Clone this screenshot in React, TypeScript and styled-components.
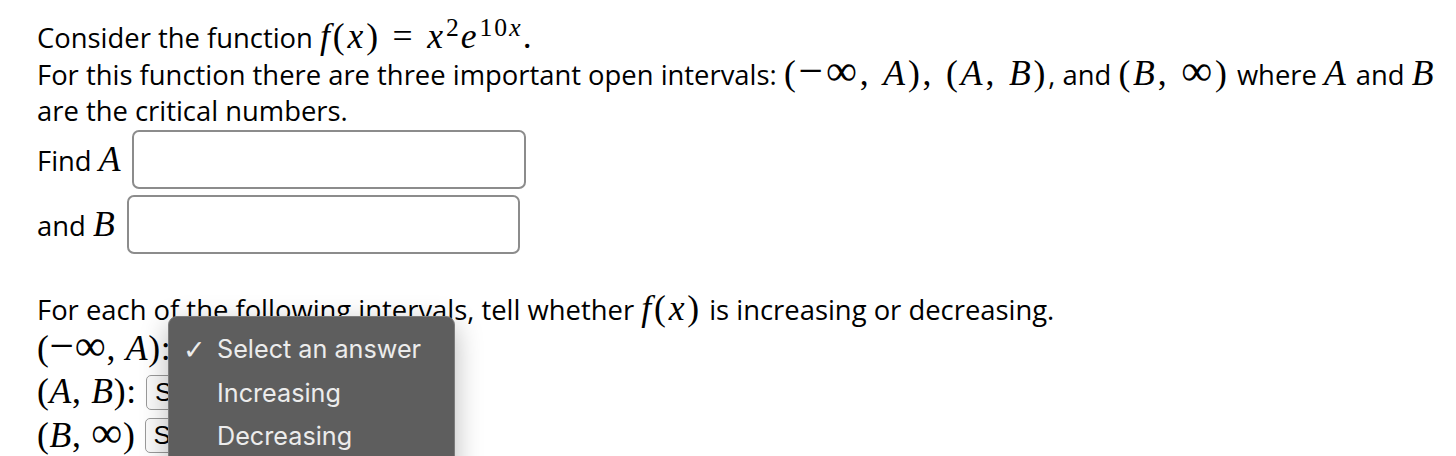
import { createGlobalStyle, styled } from "styled-components";

const GlobalStyle = createGlobalStyle`
    html, body {
        margin: 0;
        background: #ffffff;
    }
    body {
        font-family: "Open Sans", "Noto Sans", sans-serif;
        color: #000;
    }
`;

const StyledMain = styled.main`
    padding: 18px 0 0 37px;
    font-size: 27.4px;
    line-height: 37px;
    white-space: nowrap;
`;

const StyledLine = styled.div`
    height: 37px;
`;

// tight is for the interval labels, which sit a little closer than inline math
const StyledMath = styled.span<{ upright?: boolean; tight?: boolean }>`
    font-family: "Liberation Serif", "DejaVu Serif", serif;
    font-style: ${({ upright }) => (upright ? "normal" : "italic")};
    font-size: 1.3em;
    letter-spacing: ${({ tight }) => (tight ? "0.02em" : "0.08em")};
`;

const StyledSymbol = styled.span`
    font-size: 1.22em;
    line-height: 0;
`;

const StyledSup = styled.sup`
    font-size: 0.72em;
    line-height: 0;
    vertical-align: 0.62em;
`;

const StyledAnswerRow = styled.div<{ top: number }>`
    display: flex;
    align-items: center;
    gap: 9px;
    margin-top: ${({ top }) => top}px;
    height: 59px;
`;

const StyledInput = styled.input<{ boxWidth: number }>`
    width: ${({ boxWidth }) => boxWidth}px;
    height: 59px;
    box-sizing: border-box;
    border: 2px solid #8c8c8c;
    border-radius: 7px;
    background: #fff;
    outline: none;
`;

const StyledIntervals = styled.section`
    position: relative;
    margin-top: 36px;
`;

const StyledIntervalRow = styled.div`
    display: flex;
    align-items: center;
    gap: 9px;
    height: 43.5px;
`;

const StyledSelect = styled.div`
    height: 35px;
    padding: 0 8px;
    box-sizing: border-box;
    border: 1.5px solid #9a9a9a;
    border-radius: 5px;
    background: #fafafa;
    font-family: "Liberation Sans", Arial, sans-serif;
    font-size: 26px;
    line-height: 32px;
    color: #000;
`;

const StyledMenu = styled.div`
    position: absolute;
    left: 131px;
    top: 26px;
    width: 287px;
    height: 170px;
    box-sizing: border-box;
    padding-top: 11px;
    background: #5e5e5e;
    border: 1px solid #7c7c7c;
    border-radius: 9px;
    box-shadow: 0 8px 28px rgba(0, 0, 0, 0.28);
    font-family: Inter, "Liberation Sans", sans-serif;
    font-size: 25.2px;
    color: #ececec;
`;

const StyledOption = styled.div`
    display: flex;
    align-items: center;
    height: 43.5px;
`;

const StyledCheck = styled.span`
    width: 48px;
    padding-left: 14px;
    box-sizing: border-box;
    font-family: "DejaVu Sans", sans-serif;
    font-size: 27px;
`;

const options = ["Select an answer", "Increasing", "Decreasing"];

const Inf = () => <StyledSymbol>∞</StyledSymbol>;
const Minus = () => <StyledSymbol>−</StyledSymbol>;

export default function App() {
    return (
        <>
            <GlobalStyle />
            <StyledMain>
                <StyledLine>
                    Consider the function <StyledMath>f</StyledMath>
                    <StyledMath upright>(</StyledMath>
                    <StyledMath>x</StyledMath>
                    <StyledMath upright>) = </StyledMath>
                    <StyledMath>x</StyledMath>
                    <StyledSup><StyledMath upright>2</StyledMath></StyledSup>
                    <StyledMath>e</StyledMath>
                    <StyledSup><StyledMath upright>10</StyledMath><StyledMath>x</StyledMath></StyledSup>
                    <StyledMath upright>.</StyledMath>
                </StyledLine>
                <StyledLine>
                    For this function there are three important open intervals:{" "}
                    <StyledMath upright>(<Minus /><Inf />, </StyledMath><StyledMath>A</StyledMath><StyledMath upright>), (</StyledMath>
                    <StyledMath>A</StyledMath><StyledMath upright>, </StyledMath><StyledMath>B</StyledMath>
                    <StyledMath upright>)</StyledMath>, and{" "}
                    <StyledMath upright>(</StyledMath><StyledMath>B</StyledMath><StyledMath upright>, <Inf />)</StyledMath> where{" "}
                    <StyledMath>A</StyledMath> and <StyledMath>B</StyledMath>
                </StyledLine>
                <StyledLine>are the critical numbers.</StyledLine>

                <StyledAnswerRow top={1}>
                    <span>Find <StyledMath>A</StyledMath></span>
                    <StyledInput boxWidth={394} />
                </StyledAnswerRow>
                <StyledAnswerRow top={6}>
                    <span>and <StyledMath>B</StyledMath></span>
                    <StyledInput boxWidth={393} />
                </StyledAnswerRow>

                <StyledIntervals>
                    <StyledLine>
                        For each of the following intervals, tell whether <StyledMath>f</StyledMath>
                        <StyledMath upright>(</StyledMath><StyledMath>x</StyledMath><StyledMath upright>)</StyledMath> is increasing or decreasing.
                    </StyledLine>
                    <StyledIntervalRow>
                        <span>
                            <StyledMath upright tight>(<Minus /><Inf />, </StyledMath><StyledMath tight>A</StyledMath>
                            <StyledMath upright tight>):</StyledMath>
                        </span>
                        <StyledSelect>Select an answer</StyledSelect>
                    </StyledIntervalRow>
                    <StyledIntervalRow>
                        <span>
                            <StyledMath upright tight>(</StyledMath><StyledMath tight>A</StyledMath><StyledMath upright tight>, </StyledMath>
                            <StyledMath tight>B</StyledMath><StyledMath upright tight>):</StyledMath>
                        </span>
                        <StyledSelect>Select an answer</StyledSelect>
                    </StyledIntervalRow>
                    <StyledIntervalRow>
                        <span>
                            <StyledMath upright tight>(</StyledMath><StyledMath tight>B</StyledMath>
                            <StyledMath upright tight>, <Inf />)</StyledMath>
                        </span>
                        <StyledSelect>Select an answer</StyledSelect>
                    </StyledIntervalRow>

                    <StyledMenu>
                        {options.map((opt, i) => (
                            <StyledOption key={opt}>
                                <StyledCheck>{i === 0 ? "✓" : ""}</StyledCheck>
                                {opt}
                            </StyledOption>
                        ))}
                    </StyledMenu>
                </StyledIntervals>
            </StyledMain>
        </>
    );
}
